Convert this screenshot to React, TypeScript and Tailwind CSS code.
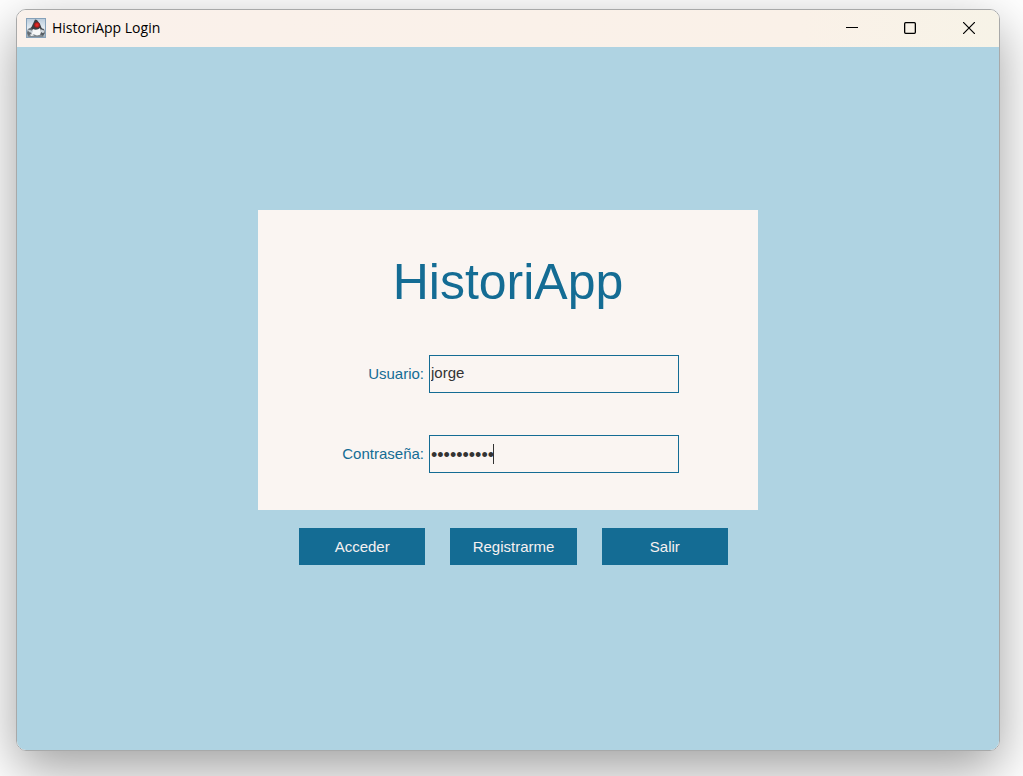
import { useState } from "react";

function AppIcon() {
  return (
    <svg className="size-5 shrink-0" viewBox="0 0 20 20" aria-hidden="true">
      <defs>
        <linearGradient id="sky" x1="0" y1="0" x2="0" y2="1">
          <stop offset="0" stopColor="#b9cbdb" />
          <stop offset="0.5" stopColor="#e4ecf2" />
          <stop offset="1" stopColor="#9aa9b5" />
        </linearGradient>
        <radialGradient id="nose">
          <stop offset="0" stopColor="#f5322b" />
          <stop offset="1" stopColor="#a31515" />
        </radialGradient>
      </defs>
      <rect x="0.5" y="0.5" width="19" height="19" fill="url(#sky)" stroke="#86a1b9" />
      <path d="M2 11 6 9l2 3-2 5-4 1-1-3z" fill="#646c73" />
      <path d="M15 10l3 1 1 4-2 3-4-1z" fill="#565d63" />
      <path d="M9 1.5 11 2 14 6 16 11 13 12 7 12 5 10z" fill="#3b3e42" />
      <path d="M7 11c2 1 5 1 7-1l1 4-1 3-3 1-4-1-2-2z" fill="#f6f7f8" />
      <path d="M1.5 11.500 4 12l3 1-1 2-3-1z" fill="#c3ccd3" />
      <path d="M15 11.500l3 1 .500 2-2 .500-2-1.500z" fill="#cfd6db" />
      <path d="M3 17l4-1 4 1.500 4-1 3 2.500H2z" fill="#7f888f" />
      <path d="M4 16.500l3-.500 1 1.500-3 .500z" fill="#eef1f3" />
      <circle cx="11" cy="7" r="2.800" fill="url(#nose)" />
    </svg>
  );
}

const actions = ["Acceder", "Registrarme", "Salir"];

function TitleBar() {
  return (
    <header className="flex h-[37px] items-center bg-linear-to-r from-[#faf1eb] via-[#faf1e8] via-80% to-[#f7f3e7] pb-0.5 pl-[9px]">
      <AppIcon />
      <h1 className="ml-1.5 flex-1 font-['Open_Sans',sans-serif] text-[14px] leading-5 text-black">HistoriApp Login</h1>
      <button type="button" aria-label="Minimizar" className="flex h-full w-[58px] items-center justify-center">
        <svg className="size-3" viewBox="0 0 12 12" stroke="#000"><path d="M0 5.5h12" /></svg>
      </button>
      <button type="button" aria-label="Maximizar" className="flex h-full w-[58px] items-center justify-center">
        <svg className="size-3" viewBox="0 0 12 12" fill="none" stroke="#000" strokeWidth="1.3">
          <rect x="0.65" y="0.65" width="10.7" height="10.7" rx="1" />
        </svg>
      </button>
      <button type="button" aria-label="Cerrar" className="flex h-full w-[60px] items-center justify-center">
        <svg className="size-3" viewBox="0 0 12 12" stroke="#000" strokeWidth="1.2"><path d="M0 0 12 12M12 0 0 12" /></svg>
      </button>
    </header>
  );
}

export default function App() {
  const [user, setUser] = useState("jorge");
  const [password, setPassword] = useState("historia10");

  return (
    <div className="flex min-h-screen overflow-hidden bg-white pt-[9px] pr-[23px] pb-[25px] pl-4 font-['Liberation_Sans',Arial,sans-serif] text-[15px] leading-5">
      <div className="flex flex-1 flex-col overflow-hidden rounded-[10px] border border-[#a8a9a9] shadow-[0_18px_52px_rgba(0,0,0,0.38)]">
        <TitleBar />
        <main className="flex flex-1 flex-col items-center justify-center bg-[#afd3e2] pb-[22px]">
          <form className="w-[500px]" onSubmit={(e) => e.preventDefault()}>
            <div className="bg-[#faf5f2] pt-11 pb-[37px] text-[#146c94]">
              <h2 className="text-center text-[50px] leading-14">HistoriApp</h2>
              <div className="mt-[45px] grid grid-cols-[166px_250px] items-center gap-x-[5px] gap-y-[42px]">
                <label htmlFor="user" className="text-right">Usuario:</label>
                <input
                  id="user"
                  type="text"
                  value={user}
                  onChange={(e) => setUser(e.target.value)}
                  className="h-[38px] border border-[#146c94] px-px pb-[3px] text-[#333] outline-none"
                />
                <label htmlFor="password" className="text-right">Contraseña:</label>
                <div className="relative">
                  <input
                    id="password"
                    type="password"
                    value={password}
                    onChange={(e) => setPassword(e.target.value)}
                    className="block h-[38px] w-full border border-[#146c94] px-px pt-0.5 text-[18px] text-[#333] outline-none"
                  />
                  <span className="absolute top-[9px] left-16 h-5 w-px bg-[#333]" />
                </div>
              </div>
            </div>
            <div className="mt-[18px] mr-[30px] ml-[41px] grid grid-cols-3 gap-[25px]">
              {actions.map((name) => (
                <button key={name} type="button" className="h-[37px] bg-[#146c94] text-[#f6f1f1]">
                  {name}
                </button>
              ))}
            </div>
          </form>
        </main>
      </div>
    </div>
  );
}
